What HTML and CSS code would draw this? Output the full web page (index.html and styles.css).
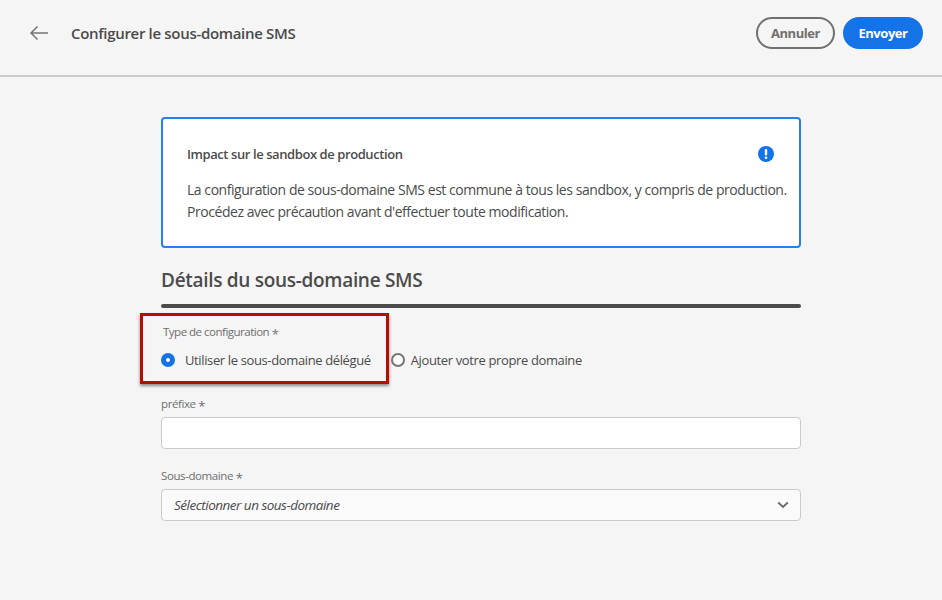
FILE: index.html
```html
<!DOCTYPE html>
<html lang="fr">
<head>
<meta charset="utf-8">
<title>Configurer le sous-domaine SMS</title>
<link rel="stylesheet" href="styles.css">
</head>
<body>
<header class="topbar">
  <div class="topbar-left">
    <svg class="back" width="20" height="16" viewBox="0 0 20 16" aria-hidden="true"><path d="M19 8H2M8.500 1.500 2 8l6.500 6.500" fill="none" stroke="#747474" stroke-width="1.500"/></svg>
    <h1 class="title">Configurer le sous-domaine SMS</h1>
  </div>
  <div class="actions">
    <button class="btn btn-ghost">Annuler</button>
    <button class="btn btn-primary">Envoyer</button>
  </div>
</header>
<main class="content">
  <section class="alert">
    <div class="alert-head">
      <h2 class="alert-title">Impact sur le sandbox de production</h2>
      <svg width="16" height="16" viewBox="0 0 16 16" aria-hidden="true"><circle cx="8" cy="8" r="8" fill="#1473e6"/><rect x="6.800" y="3" width="2.400" height="6.500" rx="1" fill="#fff"/><circle cx="8" cy="11.800" r="1.300" fill="#fff"/></svg>
    </div>
    <p class="alert-body">La configuration de sous-domaine SMS est commune à tous les sandbox, y compris de production.<br>Procédez avec précaution avant d'effectuer toute modification.</p>
  </section>
  <h2 class="section-title">Détails du sous-domaine SMS</h2>
  <div class="rule"></div>
  <div class="radio-field">
    <div class="label label-radio">Type de configuration <span class="star">*</span></div>
    <div class="radios">
      <label class="radio"><span class="dot dot-on"></span>Utiliser le sous-domaine délégué</label>
      <label class="radio"><span class="dot"></span>Ajouter votre propre domaine</label>
    </div>
    <div class="highlight"></div>
  </div>
  <div class="field">
    <div class="label">préfixe <span class="star">*</span></div>
    <div class="input"></div>
  </div>
  <div class="field field-select">
    <div class="label">Sous-domaine <span class="star">*</span></div>
    <div class="select">
      <span class="placeholder">Sélectionner un sous-domaine</span>
      <svg width="12" height="8" viewBox="0 0 12 8" aria-hidden="true"><path d="M1.200 1.500 6 6l4.800-4.500" fill="none" stroke="#6e6e6e" stroke-width="2"/></svg>
    </div>
  </div>
</main>
</body>
</html>
```
FILE: styles.css
```css
* { box-sizing: border-box; }
html, body { margin: 0; height: 100%; }
body {
  background: #f5f5f5;
  color: #4b4b4b;
  font-family: "Open Sans", "Noto Sans", sans-serif;
  font-size: 14px;
  overflow: hidden;
}
.topbar {
  height: 77px;
  border-bottom: 2px solid #cacaca;
  display: flex;
  align-items: center;
  justify-content: space-between;
  padding: 0 19px 9px 29px;
}
.topbar-left { display: flex; align-items: center; gap: 22px; }
.back { display: block; }
.title { margin: 0; font-size: 15px; font-weight: 600; color: #4b4b4b; letter-spacing: -0.32px; }
.actions { display: flex; gap: 8px; }
.btn {
  height: 32px;
  border-radius: 16px;
  font-family: inherit;
  font-size: 13px;
  font-weight: 700;
  letter-spacing: -0.45px;
  padding: 0;
}
.btn-ghost { width: 79px; background: transparent; border: 2px solid #707070; color: #707070; }
.btn-primary { width: 80px; background: #1473e6; border: 2px solid #1473e6; color: #fff; }
.content { width: 640px; margin: 40px 0 0 161px; }
.alert {
  height: 131px;
  background: #fff;
  border: 2px solid #2680eb;
  border-radius: 4px;
  padding: 24px 11px 0 24px;
}
.alert-head { display: flex; justify-content: space-between; align-items: center; padding-right: 14px; height: 22px; }
.alert-title { margin: 0; font-size: 13px; font-weight: 600; color: #4b4b4b; letter-spacing: -0.42px; }
.alert-body { margin: 14px 0 0; font-size: 14px; line-height: 22px; color: #4b4b4b; letter-spacing: -0.45px; white-space: nowrap; }
.section-title { margin: 19px 0 0; font-size: 19px; line-height: 26px; font-weight: 600; color: #4b4b4b; letter-spacing: -0.3px; }
.rule { height: 4px; background: #4b4b4b; border-radius: 2px; margin-top: 11px; }
.radio-field { position: relative; height: 88px; padding-top: 16px; }
.label { font-size: 11.500px; line-height: 16px; color: #6e6e6e; letter-spacing: -0.4px; }
.label-radio { padding-left: 2px; letter-spacing: -0.5px; }
.star { font-size: 13px; line-height: 1; color: #6e6e6e; vertical-align: -3px; }
.radios { display: flex; margin-top: 10px; gap: 20px; }
.radio { display: flex; align-items: center; gap: 10px; line-height: 18px; font-size: 13px; letter-spacing: -0.37px; color: #4b4b4b; }
.radio:last-child { gap: 6px; }
.dot { width: 14px; height: 14px; border-radius: 50%; border: 2px solid #747474; background: #fff; flex: none; }
.dot-on { border: 5px solid #1473e6; }
.highlight {
  position: absolute;
  left: -21px; top: 5px;
  width: 249px; height: 71px;
  border: 3px solid #b80c00;
  box-shadow: 0 2px 3px rgba(0,0,0,.45);
  pointer-events: none;
}
.input { height: 32px; margin-top: 4px; background: #fff; border: 1px solid #cacaca; border-radius: 4px; }
.field-select { margin-top: 19px; }
.select {
  height: 32px; margin-top: 4px; background: #fafafa; border: 1px solid #cacaca; border-radius: 4px;
  display: flex; align-items: center; justify-content: space-between; padding: 0 11px 0 12px;
}
.placeholder { font-style: italic; font-size: 13.500px; letter-spacing: -0.5px; color: #4b4b4b; }
```
